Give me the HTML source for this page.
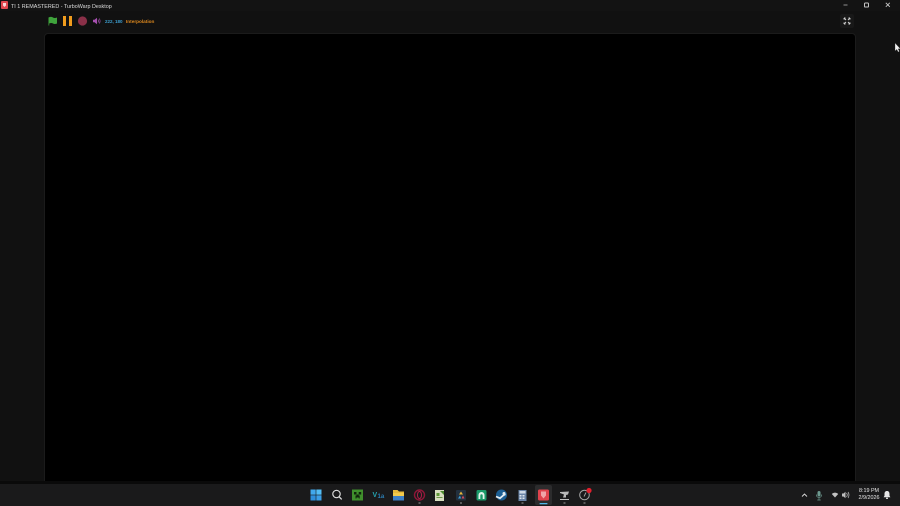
<!DOCTYPE html>
<html><head><meta charset="utf-8"><style>
html,body{margin:0;padding:0;width:900px;height:506px;overflow:hidden;background:#111;font-family:"Liberation Sans",sans-serif}
.a{position:absolute}
svg{position:absolute;left:0;top:0}
</style></head><body>
<div class="a" style="left:0;top:0;width:900px;height:11px;background:#131313"></div>
<div class="a" style="left:45px;top:34px;width:810px;height:447px;background:#000;border-radius:3px 3px 0 0;box-shadow:0 0 0 1px #1b1b1b"></div>
<div class="a" style="left:0;top:481px;width:900px;height:3px;background:#0a0a0a"></div>
<div class="a" style="left:0;top:484px;width:900px;height:22px;background:#1a1a1b"></div>
<div class="a" style="left:11px;top:2px;font-size:5.4px;line-height:7px;color:#dcdcdc;white-space:nowrap;transform:translateY(2px)">TI 1 REMASTERED - TurboWarp Desktop</div>
<div class="a" style="left:105px;top:19px;font-size:4.5px;line-height:6px;font-weight:bold;color:#3d9fd0;white-space:nowrap">222, 180</div>
<div class="a" style="left:126px;top:19px;font-size:4.7px;line-height:6px;font-weight:bold;color:#e08a1e;white-space:nowrap">Interpolation</div>
<div class="a" style="left:855px;top:488px;width:28px;text-align:center;font-size:5.4px;line-height:7px;color:#e6e6e6;white-space:nowrap">8:19 PM<br>2/9/2026</div>
<svg width="900" height="506" viewBox="0 0 900 506">
<!-- app icon -->
<rect x="1" y="1" width="7" height="8" rx="1" fill="#e0484f"/>
<path d="M3 3h3v2.500l-1.500 1.500-1.500-1.500z" fill="#f7d7d7"/>
<!-- flag -->
<path d="M48.500 17.500c2-1 3.500-.6 4.500 0s2.500.6 4 0v6c-1.500.7-3 .6-4 0s-2.500-.6-3.800 0V25.500h-.7z" fill="#3fa33c"/>
<!-- pause -->
<rect x="63" y="16" width="3" height="10" fill="#f09c1d"/>
<rect x="69" y="16" width="3" height="10" fill="#f09c1d"/>
<!-- stop -->
<circle cx="82.500" cy="21" r="4.600" fill="#8a3048"/>
<!-- speaker -->
<path d="M93 19.800h1.500l2.500-2v6.400l-2.500-2H93z" fill="#a650b0"/>
<path d="M98 19.500c.6 1 .6 2 0 3M99.300 18.500c1 1.600 1 3.400 0 5" stroke="#a650b0" stroke-width=".7" fill="none"/>
<!-- window controls -->
<path d="M843.500 5h4" stroke="#b0b0b0" stroke-width=".8"/>
<rect x="864.500" y="3" width="4" height="4" rx=".8" stroke="#c4c4c4" stroke-width="1" fill="none"/>
<path d="M885.800 2.800l4 4M889.800 2.800l-4 4" stroke="#d0d0d0" stroke-width=".8"/>
<!-- fullscreen -->
<rect x="840" y="14" width="14" height="14" rx="2" fill="#181818"/>
<path d="M844 18l2 2M844 18v1.500M844 18h1.500M850 18l-2 2M850 18v1.500M850 18h-1.500M844 24l2-2M844 24v-1.500M844 24h1.500M850 24l-2-2M850 24v-1.500M850 24h-1.500" stroke="#d2d2d2" stroke-width=".9" fill="none"/>
<!-- cursor -->
<path d="M895 43v8l1.800-1.600 1.300 2.600 1.300-.6-1.200-2.500H900.500z" fill="#f2f2f2" stroke="#222" stroke-width=".3"/>
<!-- start -->
<g fill="#41a8ec"><rect x="310.500" y="489.500" width="5.200" height="5.200"/><rect x="316.300" y="489.500" width="5.200" height="5.200" fill="#52bdf5"/><rect x="310.500" y="495.300" width="5.200" height="5.200" fill="#2e8fdb"/><rect x="316.300" y="495.300" width="5.200" height="5.200" fill="#3b9ee6"/></g>
<!-- search -->
<circle cx="336.500" cy="494" r="3.700" stroke="#dcdcdc" stroke-width="1.200" fill="none"/><path d="M339.200 496.800l2.500 2.600" stroke="#dcdcdc" stroke-width="1.300"/>
<!-- creeper -->
<rect x="352" y="489.500" width="11" height="11" fill="#3f8f2c"/>
<path d="M354 492h2.500v2.500H354zM358.700 492h2.500v2.500h-2.500zM356.500 494.500h2.200v1h1v3h-1v-1h-2.200v1h-1v-3h1z" fill="#10240c"/>
<!-- vs-like -->
<text x="372.500" y="497" font-family="Liberation Sans" font-weight="bold" font-size="7" fill="#25a5b0">V</text>
<text x="377.500" y="498" font-family="Liberation Sans" font-weight="bold" font-size="6" fill="#2c7fb5">1a</text>
<!-- folder -->
<path d="M393 490h4.500l1.500 1.500h5v9h-11z" fill="#e7b83a"/><rect x="393" y="494.500" width="11" height="6" fill="#3d7fc4"/><rect x="393" y="493" width="11" height="3" fill="#f2ca4c"/>
<!-- opera -->
<circle cx="419.500" cy="495" r="5" stroke="#8d1738" stroke-width="1.400" fill="none"/><ellipse cx="419.500" cy="495" rx="2" ry="3.600" stroke="#b01f48" stroke-width="1" fill="none"/>
<rect x="418.500" y="502.500" width="2" height="1" fill="#999"/>
<!-- notes -->
<rect x="435" y="490" width="9" height="11" fill="#d8dfc0"/><path d="M436.500 493h3v3h-3z" fill="#5f9a38"/><path d="M440 491l4 0v4z" fill="#4d8a2e"/><path d="M436.500 497.500h6" stroke="#6e9a48" stroke-width="1"/>
<!-- dark app -->
<rect x="456" y="490" width="10" height="10.500" rx="1" fill="#22303e"/><path d="M461 491.500l2 3h-4z" fill="#e8b53a"/><path d="M458 498.500l2-3 1 3z" fill="#3fa0d8"/><path d="M461.500 498.500l1.500-3 1.500 3z" fill="#d04a5e"/>
<rect x="460" y="502.500" width="2" height="1" fill="#999"/>
<!-- green app -->
<rect x="476.500" y="490" width="10" height="10.500" rx="1.500" fill="#1a9a68"/><path d="M478.500 499v-4a3 3 0 0 1 6 0v4h-1.800v-3.500a1.200 1.200 0 0 0-2.400 0V499z" fill="#e4f4ec"/>
<!-- steam -->
<circle cx="501.500" cy="495" r="5.500" fill="#1c5f94"/><path d="M496 496.500l4 1.700 3.500-3 2-1" stroke="#e4edf3" stroke-width="1.700" fill="none"/><circle cx="504" cy="493.500" r="1.500" fill="#e4edf3"/>
<!-- calc -->
<rect x="518.500" y="490" width="8" height="11" fill="#6b85a8"/><rect x="519.500" y="491" width="6" height="2.500" fill="#cfd9e6"/><path d="M519.500 495h2v1.500h-2zM522.500 495h2v1.500h-2zM519.500 497.500h2v1.500h-2zM522.500 497.500h2v1.500h-2z" fill="#dfe6ee"/>
<rect x="521.500" y="502.500" width="2" height="1" fill="#999"/>
<!-- turbowarp active -->
<rect x="535" y="485" width="17" height="20" rx="2" fill="#2c2c2d"/>
<rect x="538" y="489.500" width="11" height="11" rx="1.500" fill="#e0434d"/>
<path d="M541 491.500h5v4l-2.500 3-2.500-3z" fill="#f0a5a9"/>
<rect x="539.500" y="503" width="8" height="1.300" rx=".6" fill="#4fb5e6"/>
<!-- unity-like -->
<path d="M560 492l9-.5-1 3-2 .5v2.500h-3l1-3-4-1.500z" fill="#b9b9b9"/><path d="M560 499.500h9" stroke="#eee" stroke-width=".8"/>
<rect x="563.500" y="502.500" width="2" height="1" fill="#999"/>
<!-- update icon -->
<circle cx="584.500" cy="495" r="4.800" stroke="#a4a4a4" stroke-width="1" fill="none"/><path d="M586 492.500l-2 4" stroke="#a4a4a4" stroke-width=".9"/>
<circle cx="589" cy="490.500" r="2.600" fill="#e3202e"/>
<rect x="583.500" y="502.500" width="2" height="1" fill="#999"/>
<!-- tray -->
<path d="M802 496.500l2.500-2.500 2.500 2.500" stroke="#dcdcdc" stroke-width=".9" fill="none"/>
<rect x="817.500" y="491" width="3" height="5.500" rx="1.500" fill="#6d9a90"/><path d="M816.300 494.500c0 4 5.400 4 5.400 0M819 497.500v2.500M817.300 500h3.400" stroke="#6d9a90" stroke-width=".7" fill="none"/>
<path d="M831.800 494c2-1.900 4.400-1.900 6.400 0l-3.200 3.500z" fill="#c2c2c2"/>
<path d="M842 493.500h1.500l2-1.800v6.600l-2-1.800H842z" fill="#bebebe"/><path d="M846.500 493c.9 1.200.9 2.800 0 4M848 492c1.200 1.800 1.200 4.200 0 6" stroke="#bebebe" stroke-width=".7" fill="none"/>
<path d="M887 491c-1.800 0-2.500 1.300-2.500 3v1.800l-.9 1.400h6.800l-.9-1.400V494c0-1.700-.7-3-2.500-3z" fill="#e6e6e6"/><rect x="886" y="497.700" width="2" height="1.200" fill="#e6e6e6"/>
</svg>
</body></html>
